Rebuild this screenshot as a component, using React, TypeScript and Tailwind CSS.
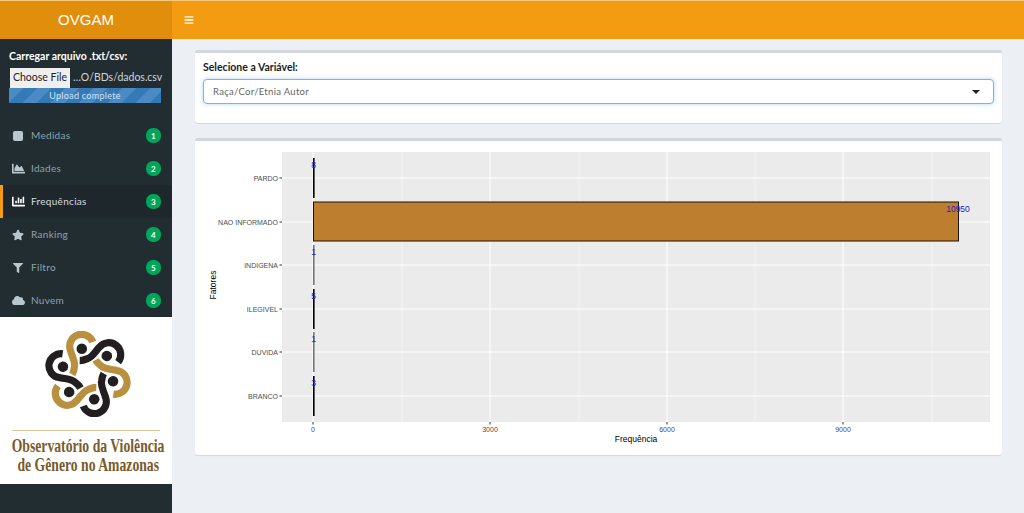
import { FaBars, FaChartArea, FaChartBar, FaCloud, FaFilter, FaStar } from "react-icons/fa";
import type { ReactNode } from "react";

const menu: { label: string; badge: number; icon: ReactNode; active?: boolean }[] = [
  { label: "Medidas", badge: 1, icon: <span className="block h-[10px] w-[10px] rounded-[2px] bg-[#b8c7ce]" /> },
  { label: "Idades", badge: 2, icon: <FaChartArea size={13} /> },
  { label: "Frequências", badge: 3, icon: <FaChartBar size={13} />, active: true },
  { label: "Ranking", badge: 4, icon: <FaStar size={12} /> },
  { label: "Filtro", badge: 5, icon: <FaFilter size={10} /> },
  { label: "Nuvem", badge: 6, icon: <FaCloud size={13} /> },
];

const rows = [
  { label: "PARDO", y: 178, value: "8", valueY: 165, dark: true },
  { label: "NAO INFORMADO", y: 222, value: "", valueY: 0, dark: true },
  { label: "INDIGENA", y: 265, value: "1", valueY: 252, dark: false },
  { label: "ILEGIVEL", y: 309, value: "5", valueY: 296, dark: true },
  { label: "DUVIDA", y: 352, value: "1", valueY: 339, dark: false },
  { label: "BRANCO", y: 396, value: "3", valueY: 383, dark: true },
];

const majorX = [
  { x: 313, label: "0" },
  { x: 490, label: "3000" },
  { x: 667, label: "6000" },
  { x: 843, label: "9000" },
];
const minorX = [402, 579, 755, 932];

// chart coordinates are page coordinates shifted by the panel's offset
const ox = 196;
const oy = 141;

function Chart() {
  return (
    <svg width="805" height="314" viewBox={`${ox} ${oy} 805 314`} className="block">
      <rect x="282" y="152" width="708" height="270" fill="#ebebeb" />
      {minorX.map((x) => (
        <line key={x} x1={x} x2={x} y1="152" y2="422" stroke="#f4f4f4" strokeWidth="1" />
      ))}
      {majorX.map((t) => (
        <line key={t.x} x1={t.x} x2={t.x} y1="152" y2="422" stroke="#fff" strokeWidth="1" />
      ))}
      {rows.map((r) => (
        <g key={r.label}>
          <line x1="282" x2="990" y1={r.y} y2={r.y} stroke="#fff" strokeWidth="1" />
          <line x1="279.5" x2="282" y1={r.y} y2={r.y} stroke="#333" strokeWidth="1" />
          <text x="278" y={r.y + 2.5} textAnchor="end" fontSize="7" fill="#4d4d4d" fontFamily="Liberation Sans, sans-serif">
            {r.label}
          </text>
          {r.label !== "NAO INFORMADO" && (
            <>
              <rect x="313" y={r.y - 20} width="1.6" height="40" fill={r.dark ? "#000" : "#777"} />
              <text x="313.5" y={r.valueY + 3} textAnchor="middle" fontSize="8.5" fill="#2222cc" fontFamily="Liberation Sans, sans-serif">
                {r.value}
              </text>
            </>
          )}
        </g>
      ))}
      <rect x="313.5" y="202" width="645" height="39" fill="#bd7e2f" stroke="#1a1205" strokeWidth="1" />
      <text x="958" y="212" textAnchor="middle" fontSize="8.5" fill="#2222cc" fontFamily="Liberation Sans, sans-serif">
        10950
      </text>
      {majorX.map((t) => (
        <g key={t.label}>
          <line x1={t.x} x2={t.x} y1="422" y2="424.5" stroke="#333" strokeWidth="1" />
          <text x={t.x} y="432" textAnchor="middle" fontSize="7" fill="#4d4d4d" fontFamily="Liberation Sans, sans-serif">
            {t.label}
          </text>
        </g>
      ))}
      <text x="636" y="442" textAnchor="middle" fontSize="8.5" fill="#000" fontFamily="Liberation Sans, sans-serif">
        Frequência
      </text>
      <text transform="translate(216 285) rotate(-90)" textAnchor="middle" fontSize="8.5" fill="#000" fontFamily="Liberation Sans, sans-serif">
        Fatores
      </text>
    </svg>
  );
}

function LogoMark() {
  const strokes = [0, 1, 2, 3, 4, 5];
  return (
    <svg width="86" height="86" viewBox="-45 -45 90 90" className="ml-[4px] block shrink-0">
      {strokes.map((i) => (
        <g key={i} transform={`rotate(${-60 * i})`}>
          <circle cx="-6.5" cy="-26.5" r="5.5" fill="#231f20" />
          <path
            d="M5 -33.5 A12 12 0 0 0 -18.3 -24.4 C-17 -19 -13 -13 -14.2 -7.6 C-14.6 -4 -15 -2 -16.5 0.5"
            fill="none"
            stroke={i % 2 === 0 ? "#b8903f" : "#231f20"}
            strokeWidth="7.5"
          />
        </g>
      ))}
    </svg>
  );
}

export default function App() {
  return (
    <div className="flex h-screen flex-col overflow-hidden bg-[#ecf0f5] font-['Lato',sans-serif]">
      <header className="flex h-[39px] shrink-0 border-t border-[#f5c87a] bg-[#f39c12]">
        <div className="flex w-[172px] items-center justify-center bg-[#e08e0b] font-['Liberation_Sans',sans-serif] text-[15px] text-white">
          OVGAM
        </div>
        <div className="flex items-center pl-[12px] text-white">
          <FaBars size={10} />
        </div>
      </header>

      <div className="flex min-h-0 flex-1">
        <aside className="w-[172px] shrink-0 bg-[#222d32]">
          <div className="px-[9px] pt-[10px]">
            <div className="whitespace-nowrap text-[10.5px] font-bold leading-[14px] text-white">Carregar arquivo .txt/csv:</div>
            <div className="mt-[5px] flex h-[20px] items-center pl-[1px]">
              <div className="flex h-[20px] w-[60px] shrink-0 items-center justify-center whitespace-nowrap bg-[#efefef] text-[10.5px] text-[#222]">
                Choose File
              </div>
              <span className="ml-[3px] whitespace-nowrap text-[10.5px] text-[#cfd6da]">…O/BDs/dados.csv</span>
            </div>
            <div className="flex h-[15px] w-[152px] items-center justify-center bg-[repeating-linear-gradient(135deg,#4a8bc6_0px,#4a8bc6_10px,#337ab7_10px,#337ab7_20px)] text-[9px] tracking-[0.3px] text-[#d5e4f2]">
              Upload complete
            </div>
          </div>

          <nav className="mt-[16px]">
            {menu.map((m) => (
              <div
                key={m.label}
                className={`flex h-[33px] items-center border-l-[3px] pl-[7px] pr-[11px] text-[10px] tracking-[0.3px] ${
                  m.active ? "border-[#f39c12] bg-[#1e282c] text-[#d5dde0]" : "border-transparent text-[#8aa4af]"
                }`}
              >
                <span className={`flex w-[16px] justify-center ${m.active ? "text-white" : "text-[#b8c7ce]"}`}>{m.icon}</span>
                <span className="ml-[5px] flex-1">{m.label}</span>
                <span className="flex h-[15px] w-[15px] items-center justify-center rounded-[7px] bg-[#00a65a] text-[8px] font-bold text-white">
                  {m.badge}
                </span>
              </div>
            ))}
          </nav>

          <div className="flex h-[167px] flex-col items-center overflow-hidden bg-white pt-[14px]">
            <LogoMark />
            <div className="mt-[13px] h-px w-[148px] shrink-0 bg-[#d8c6a0]" />
            <div className="ml-[5px] mt-[5px] flex flex-col items-center font-['Liberation_Serif',serif] text-[19px] font-bold leading-[19px] text-[#7a5a2b]">
              <div className="scale-x-[0.72] whitespace-nowrap">Observatório da Violência</div>
              <div className="scale-x-[0.72] whitespace-nowrap">de Gênero no Amazonas</div>
            </div>
          </div>
        </aside>

        <main className="min-w-0 flex-1 pl-[23px] pr-[22px] pt-[11px]">
          <section className="h-[73px] rounded-[3px] border-t-[3px] border-[#d2d6de] bg-white px-[8px] pt-[7px] shadow-[0_1px_1px_rgba(0,0,0,0.1)]">
            <label className="block text-[10.5px] font-bold leading-[14px] text-[#222]">Selecione a Variável:</label>
            <div className="mt-[5px] flex h-[25px] items-center justify-between rounded-[4px] border border-[#7fb2dc] bg-white pl-[9px] pr-[13px] shadow-[0_0_4px_rgba(102,175,233,0.5)]">
              <span className="pt-[1px] text-[9.5px] tracking-[0.3px] text-[#666]">Raça/Cor/Etnia Autor</span>
              <span className="h-0 w-0 border-x-[4px] border-t-[4px] border-x-transparent border-t-[#222]" />
            </div>
          </section>

          <section className="mt-[15px] h-[317px] rounded-[3px] border-t-[3px] border-[#d2d6de] bg-white pl-[1px] shadow-[0_1px_1px_rgba(0,0,0,0.1)]">
            <Chart />
          </section>
        </main>
      </div>
    </div>
  );
}
